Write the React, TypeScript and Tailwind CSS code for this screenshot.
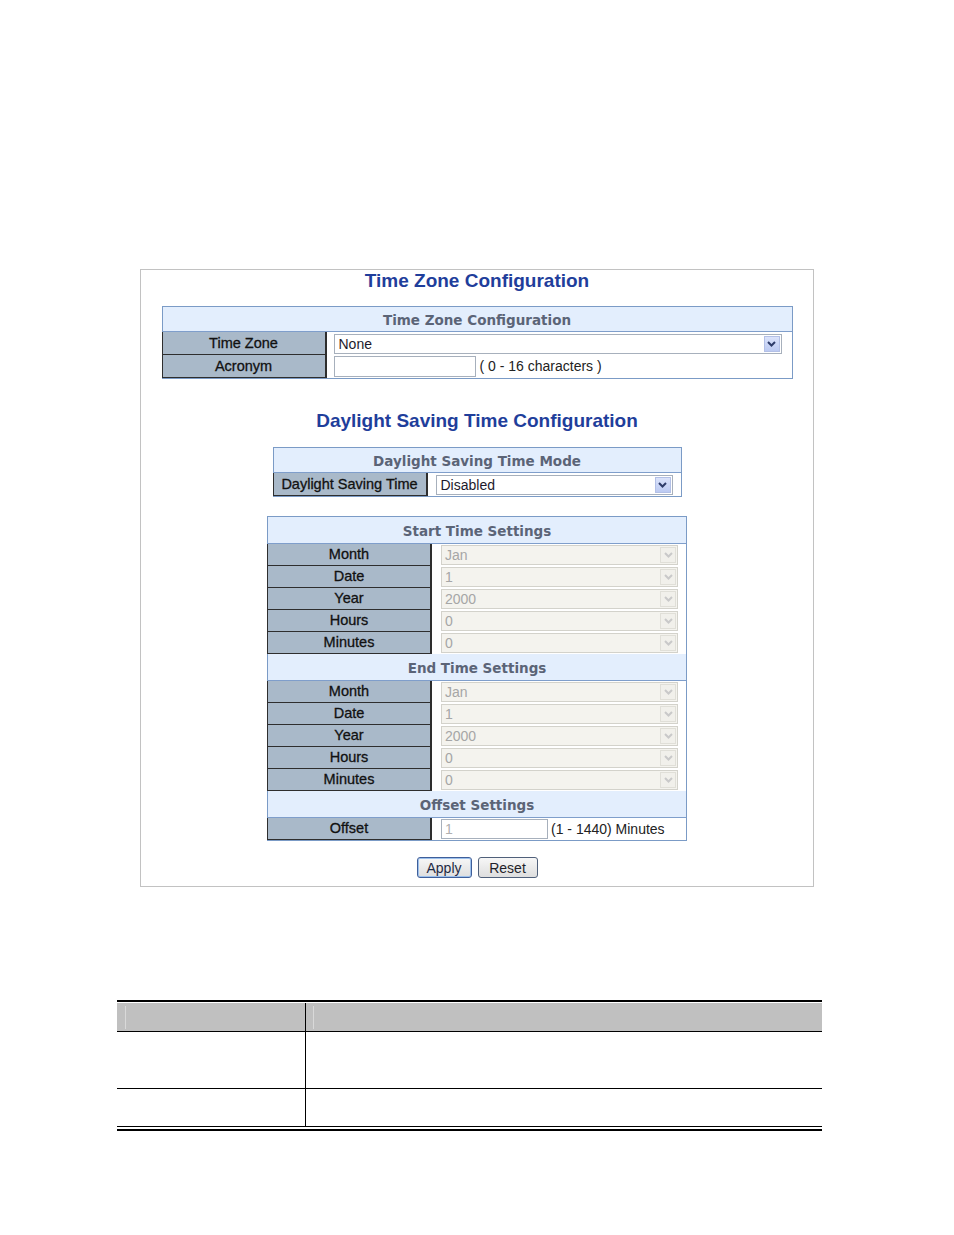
import React from "react";

const arial = { fontFamily: '"Liberation Sans", Arial, sans-serif' };
const verdana = { fontFamily: '"DejaVu Sans", Verdana, sans-serif' };

function Chevron({ color }: { color: string }) {
  return (
    <svg width="9" height="6" viewBox="0 0 9 6">
      <path d="M1 1 L4.5 4.5 L8 1" fill="none" stroke={color} strokeWidth="2" />
    </svg>
  );
}

function Select({ value, width, disabled }: { value: string; width: string; disabled?: boolean }) {
  if (disabled) {
    return (
      <div className={`${width} h-[20px] flex items-center justify-between border border-[#d3d2cb] bg-[#f4f3ee] pl-[3px] pr-[1px]`}>
        <span className="text-[14px] text-[#a6a6a6] leading-none" style={arial}>{value}</span>
        <span className="w-[16px] h-[16px] flex items-center justify-center border border-[#e0dfd8] bg-[#f1f0eb]">
          <Chevron color="#c9c9c9" />
        </span>
      </div>
    );
  }
  return (
    <div className={`${width} h-[20px] flex items-center justify-between border border-[#a7b0bc] bg-white pl-[4px] pr-[1px]`}>
      <span className="text-[14px] text-[#1d1a2c] leading-none" style={arial}>{value}</span>
      <span className="w-[16px] h-[16px] flex items-center justify-center border border-[#b3c0e6] bg-gradient-to-b from-[#dbe3fb] to-[#bccaf2]">
        <Chevron color="#2e3c6a" />
      </span>
    </div>
  );
}

function Header({ children, tall }: { children: React.ReactNode; tall?: boolean }) {
  return (
    <div
      className={`${tall ? "h-[27px]" : "h-[25px]"} flex items-center justify-center pt-[2px] bg-[#e3eefd] border-b border-[#7f9ecb] text-[13.5px] font-bold text-[#5b6477]`}
      style={verdana}
    >
      {children}
    </div>
  );
}

function Row({ label, labelW, h, pad, children }: { label: string; labelW: string; h: string; pad: string; children: React.ReactNode }) {
  return (
    <div className={`flex ${h} bg-white`}>
      <div
        className={`${labelW} -ml-px shrink-0 flex items-center justify-center pt-[1px] bg-[#a9b9c9] border-l border-b border-r-2 border-[#2e2e2e] text-[14.5px] text-[#111] [-webkit-text-stroke:0.3px_#111]`}
        style={arial}
      >
        {label}
      </div>
      <div className={`flex-1 flex items-center ${pad}`}>{children}</div>
    </div>
  );
}

const timeRows = [
  ["Month", "Jan"],
  ["Date", "1"],
  ["Year", "2000"],
  ["Hours", "0"],
  ["Minutes", "0"],
];

export default function App() {
  return (
    <div className="w-[954px] h-[1235px] bg-white pt-[269px]" style={arial}>
      <div className="ml-[140px] w-[674px] h-[618px] border border-[#c2c2c2] flex flex-col items-center">
        <div className="h-[22px] leading-[22px] text-[19px] font-bold text-[#1f3e9b]" style={arial}>
          Time Zone Configuration
        </div>

        <div className="mt-[14px] w-[631px] border border-[#7b9bc6]">
          <Header>Time Zone Configuration</Header>
          <Row label="Time Zone" labelW="w-[165px]" h="h-[23px]" pad="pl-[7px] pr-[10px]">
            <Select value="None" width="w-full" />
          </Row>
          <Row label="Acronym" labelW="w-[165px]" h="h-[23px]" pad="pl-[7px]">
            <div className="w-[142px] h-[21px] border border-[#a7b0bc] bg-white" />
            <span className="ml-[4px] text-[14px] text-[#222]">( 0 - 16 characters )</span>
          </Row>
        </div>

        <div className="mt-[31px] h-[22px] leading-[22px] text-[19px] font-bold text-[#1f3e9b]" style={arial}>
          Daylight Saving Time Configuration
        </div>

        <div className="mt-[15px] w-[409px] border border-[#7b9bc6]">
          <Header>Daylight Saving Time Mode</Header>
          <Row label="Daylight Saving Time" labelW="w-[155px]" h="h-[23px]" pad="pl-[8px] pr-[8px]">
            <Select value="Disabled" width="w-[237px]" />
          </Row>
        </div>

        <div className="mt-[19px] w-[420px] border border-[#7b9bc6]">
          <Header tall>Start Time Settings</Header>
          {timeRows.map(([l, v]) => (
            <Row key={"s" + l} label={l} labelW="w-[165px]" h="h-[22px]" pad="pl-[9px]">
              <Select value={v} width="w-[237px]" disabled />
            </Row>
          ))}
          <Header tall>End Time Settings</Header>
          {timeRows.map(([l, v]) => (
            <Row key={"e" + l} label={l} labelW="w-[165px]" h="h-[22px]" pad="pl-[9px]">
              <Select value={v} width="w-[237px]" disabled />
            </Row>
          ))}
          <Header tall>Offset Settings</Header>
          <Row label="Offset" labelW="w-[165px]" h="h-[22px]" pad="pl-[9px]">
            <div className="w-[107px] h-[20px] flex items-center border border-[#a7b0bc] bg-white pl-[3px] text-[14px] text-[#b0b0b0]">1</div>
            <span className="ml-[3px] text-[14px] text-[#222]">(1 - 1440) Minutes</span>
          </Row>
        </div>

        <div className="mt-[16px] flex gap-[6px]">
          <button className="w-[55px] h-[21px] rounded-[3px] border border-[#3f5f9a] bg-gradient-to-b from-[#f7f7f7] to-[#dedede] shadow-[inset_0_0_0_1px_#9cc0ec] text-[14px] text-[#1f2a44] leading-none" style={arial}>
            Apply
          </button>
          <button className="w-[60px] h-[21px] rounded-[3px] border border-[#50607a] bg-gradient-to-b from-[#f7f7f7] to-[#dedede] text-[14px] text-[#1f1f2a] leading-none" style={arial}>
            Reset
          </button>
        </div>
      </div>

      <div className="mt-[113px] ml-[117px] w-[705px]">
        <div className="h-[2px] bg-black" />
        <div className="h-[1px] bg-white" />
        <div className="flex h-[29px] bg-[#c0c0c0] border-b border-black">
          <div className="w-[189px] relative border-r border-black">
            <div className="absolute left-[8px] top-[3px] bottom-[2px] w-px bg-[#d9d9d9]" />
          </div>
          <div className="flex-1 relative">
            <div className="absolute left-[7px] top-[3px] bottom-[2px] w-px bg-[#d9d9d9]" />
          </div>
        </div>
        <div className="flex h-[57px] border-b border-black">
          <div className="w-[189px] border-r border-black" />
          <div className="flex-1" />
        </div>
        <div className="flex h-[38px] border-b border-black">
          <div className="w-[189px] border-r border-black" />
          <div className="flex-1" />
        </div>
        <div className="h-[2px] bg-white" />
        <div className="h-[2px] bg-black" />
      </div>
    </div>
  );
}
